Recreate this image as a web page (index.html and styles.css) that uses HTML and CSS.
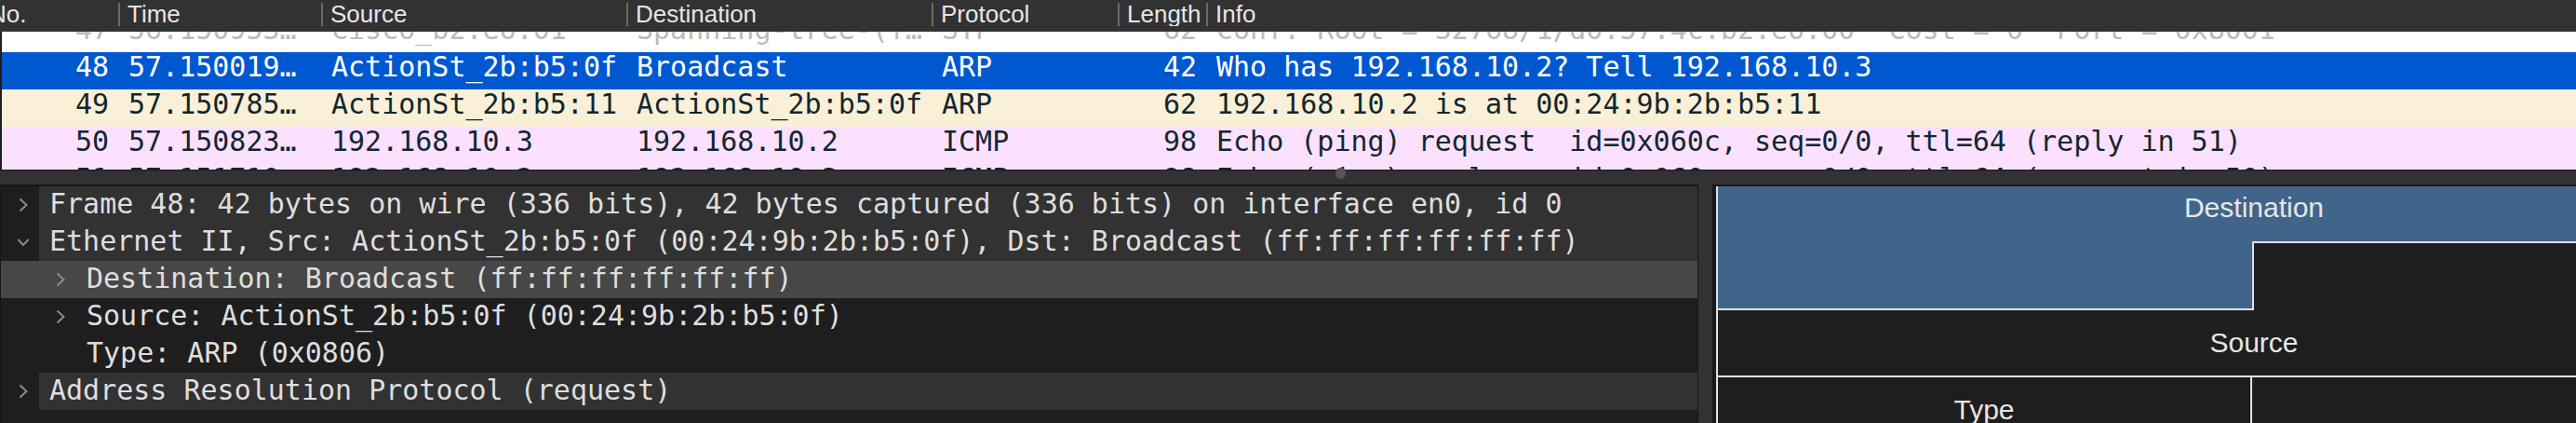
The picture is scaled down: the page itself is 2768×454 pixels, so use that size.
FILE: index.html
```html
<!DOCTYPE html>
<html>
<head>
<meta charset="utf-8">
<link rel="stylesheet" href="styles.css">
</head>
<body>
<div class="list">
  <div class="hdr cols">
    <div class="hc">No.</div>
    <div class="hc">Time</div>
    <div class="hc">Source</div>
    <div class="hc">Destination</div>
    <div class="hc">Protocol</div>
    <div class="hc">Length</div>
    <div class="hc">Info</div>
  </div>
  <div class="rowsview">
    <div class="track">
      <div class="row cols bcast">
        <div class="c r">47</div><div class="c">56.150953…</div><div class="c">Cisco_b2:e6:01</div><div class="c">Spanning-tree-(f…</div><div class="c">STP</div><div class="c r">62</div><div class="c">Conf. Root = 32768/1/d0:57:4c:b2:e6:00  Cost = 0  Port = 0x8001</div>
      </div>
      <div class="row cols selected">
        <div class="c r">48</div><div class="c">57.150019…</div><div class="c">ActionSt_2b:b5:0f</div><div class="c">Broadcast</div><div class="c">ARP</div><div class="c r">42</div><div class="c">Who has 192.168.10.2? Tell 192.168.10.3</div>
      </div>
      <div class="row cols arp">
        <div class="c r">49</div><div class="c">57.150785…</div><div class="c">ActionSt_2b:b5:11</div><div class="c">ActionSt_2b:b5:0f</div><div class="c">ARP</div><div class="c r">62</div><div class="c">192.168.10.2 is at 00:24:9b:2b:b5:11</div>
      </div>
      <div class="row cols icmp">
        <div class="c r">50</div><div class="c">57.150823…</div><div class="c">192.168.10.3</div><div class="c">192.168.10.2</div><div class="c">ICMP</div><div class="c r">98</div><div class="c">Echo (ping) request  id=0x060c, seq=0/0, ttl=64 (reply in 51)</div>
      </div>
      <div class="row cols icmp">
        <div class="c r">51</div><div class="c">57.151710…</div><div class="c">192.168.10.2</div><div class="c">192.168.10.3</div><div class="c">ICMP</div><div class="c r">98</div><div class="c">Echo (ping) reply    id=0x060c, seq=0/0, ttl=64 (request in 50)</div>
      </div>
    </div>
  </div>
</div>
<div class="hsplit"><span class="grip"></span></div>
<div class="bottom">
  <div class="tree">
    <div class="node top">
      <span class="tw"><svg width="10" height="16" viewBox="0 0 10 16"><path d="M1.5 1.5 L8.5 8 L1.5 14.5" fill="none" stroke="#8a8a8a" stroke-width="2"/></svg></span>
      <span class="lbl">Frame 48: 42 bytes on wire (336 bits), 42 bytes captured (336 bits) on interface en0, id 0</span>
    </div>
    <div class="node top">
      <span class="tw"><svg width="14" height="10" viewBox="0 0 14 10"><path d="M1.5 2 L7 8 L12.5 2" fill="none" stroke="#8a8a8a" stroke-width="2"/></svg></span>
      <span class="lbl">Ethernet II, Src: ActionSt_2b:b5:0f (00:24:9b:2b:b5:0f), Dst: Broadcast (ff:ff:ff:ff:ff:ff)</span>
    </div>
    <div class="node child sel">
      <span class="tw"><svg width="10" height="16" viewBox="0 0 10 16"><path d="M1.5 1.5 L8.5 8 L1.5 14.5" fill="none" stroke="#8a8a8a" stroke-width="2"/></svg></span>
      <span class="lbl">Destination: Broadcast (ff:ff:ff:ff:ff:ff)</span>
    </div>
    <div class="node child">
      <span class="tw"><svg width="10" height="16" viewBox="0 0 10 16"><path d="M1.5 1.5 L8.5 8 L1.5 14.5" fill="none" stroke="#8a8a8a" stroke-width="2"/></svg></span>
      <span class="lbl">Source: ActionSt_2b:b5:0f (00:24:9b:2b:b5:0f)</span>
    </div>
    <div class="node child">
      <span class="tw"></span>
      <span class="lbl">Type: ARP (0x0806)</span>
    </div>
    <div class="node top">
      <span class="tw"><svg width="10" height="16" viewBox="0 0 10 16"><path d="M1.5 1.5 L8.5 8 L1.5 14.5" fill="none" stroke="#8a8a8a" stroke-width="2"/></svg></span>
      <span class="lbl">Address Resolution Protocol (request)</span>
    </div>
  </div>
  <div class="vsplit"></div>
  <div class="bytes">
    <div class="diagram">
      <div class="f dst1">Destination</div>
      <div class="f dst2"></div>
      <div class="f src1"></div>
      <div class="f src2">Source</div>
      <div class="f type">Type</div>
      <div class="f rest"></div>
    </div>
  </div>
</div>
</body>
</html>
```

FILE: styles.css
```css
html, body {
  margin: 0;
  padding: 0;
}
body {
  width: 2768px;
  height: 454px;
  overflow: hidden;
  background: #323232;
  font-family: "DejaVu Sans Mono", monospace;
}

.cols {
  display: grid;
  grid-template-columns: 149px 218px 328px 328px 200px 95px 1fr;
}

.list {
  height: 183px;
  border-bottom: 1px solid #1a1a1a;
  box-sizing: border-box;
  overflow: hidden;
}

.hdr {
  height: 34px;
  margin-left: -22px;
  background: #323232;
  font-family: "Liberation Sans", Arial, sans-serif;
  font-size: 26px;
  color: #e6e6e6;
}
.hc {
  margin: 3px 0 6px;
  border-left: 2px solid #6a6a6a;
  padding-left: 8px;
  display: flex;
  align-items: center;
  overflow: hidden;
  white-space: nowrap;
}
.hc:first-child {
  border-left: 0;
  padding-left: 10px;
}
.hc:nth-child(6) {
  margin-right: 2px;
}

.rowsview {
  height: 148px;
  overflow: hidden;
  border-left: 2px solid #1e1e1e;
}
.track {
  margin: -18px 0 0 -24px;
}
.row {
  height: 40px;
  line-height: 32px;
  font-size: 30px;
  white-space: pre;
  color: #12272e;
}
.c {
  padding: 0 11px;
  overflow: hidden;
}
.c.r {
  text-align: right;
  padding-right: 10px;
}
.bcast { background: #ffffff; color: #babdb6; }
.selected { background: #0058d0; color: #ffffff; }
.arp { background: #faf0d7; }
.icmp { background: #fce0ff; }

.hsplit {
  height: 15px;
  display: flex;
  align-items: center;
}
.grip {
  width: 11px;
  height: 12px;
  margin-left: 1435px;
  margin-top: -10px;
  border-radius: 6px;
  background: #555555;
}

.bottom {
  display: flex;
  height: 256px;
}
.tree {
  width: 1825px;
  flex: none;
  box-sizing: border-box;
  border-top: 2px solid #171717;
  border-left: 1px solid #171717;
  border-right: 1px solid #171717;
  background: #1e1e1e;
  font-size: 30px;
  color: #dedede;
  overflow: hidden;
}
.node {
  display: flex;
  height: 40px;
  line-height: 38px;
  white-space: pre;
}
.tw {
  flex: none;
  width: 41px;
  display: flex;
  align-items: center;
  padding-left: 19px;
  box-sizing: border-box;
}
.node.top .tw svg[width="14"] {
  margin-left: -2px;
}
.lbl {
  flex: 1;
  padding-left: 11px;
}
.node.top .lbl {
  background: #323232;
}
.node.child {
  padding-left: 40px;
}
.node.child .tw {
  width: 41px;
  padding-left: 19px;
}
.node.sel {
  background: #474747;
}

.vsplit {
  width: 15px;
  flex: none;
}
.bytes {
  flex: 1;
  box-sizing: border-box;
  border-top: 2px solid #171717;
  border-left: 2px solid #171717;
  padding-left: 2px;
  background: #1e1e1e;
  overflow: hidden;
}
.diagram {
  width: 1154px;
  margin-top: -13px;
  display: grid;
  grid-template-columns: 576px 578px;
  grid-template-rows: 72px 74px 70px 72px;
  font-family: "Liberation Sans", Arial, sans-serif;
  font-size: 30px;
  color: #e6e6e6;
}
.f {
  box-sizing: border-box;
  border-left: 2px solid #e2e2e2;
  display: flex;
  align-items: center;
  justify-content: center;
}
.dst1 {
  grid-row: 1;
  grid-column: 1 / 3;
  background: #41658a;
}
.dst2 {
  grid-row: 2;
  grid-column: 1;
  background: #41658a;
  border-bottom: 2px solid #e2e2e2;
}
.src1 {
  grid-row: 2;
  grid-column: 2;
  border-top: 2px solid #e2e2e2;
}
.src2 {
  grid-row: 3;
  grid-column: 1 / 3;
}
.type {
  grid-row: 4;
  grid-column: 1;
  border-top: 2px solid #e2e2e2;
  border-right: 2px solid #e2e2e2;
}
.rest {
  grid-row: 4;
  grid-column: 2;
  border-top: 2px solid #e2e2e2;
  border-left: 0;
}
```
